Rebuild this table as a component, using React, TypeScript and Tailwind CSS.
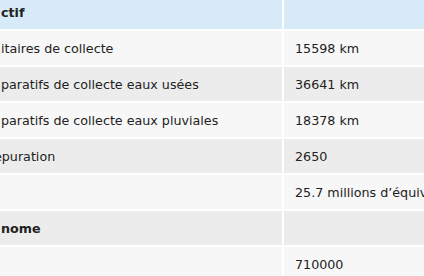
import React from "react";

type Row = { label: string; value: string; bg: string; bold?: boolean; pre?: string };

const rows: Row[] = [
  { label: "itaires de collecte", value: "15598 km", bg: "bg-[#f7f7f7]" },
  { label: "paratifs de collecte eaux usées", value: "36641 km", bg: "bg-[#ececec]" },
  { label: "paratifs de collecte eaux pluviales", value: "18378 km", bg: "bg-[#f7f7f7]" },
  { label: "puration", value: "2650", bg: "bg-[#ececec]", pre: "é" },
  { label: "", value: "25.7 millions d’équivalents habitants", bg: "bg-[#f7f7f7]" },
  { label: "nome", value: "", bg: "bg-[#ececec]", bold: true },
  { label: "", value: "710000", bg: "bg-[#f7f7f7]" },
];

export default function App() {
  return (
    <div
      className="w-[424px] h-[276px] overflow-hidden bg-white text-[12.7px] text-[#222222]"
      style={{ fontFamily: '"DejaVu Sans", Verdana, sans-serif' }}
    >
      <div className="-mt-[5px] flex flex-col gap-[2px]">
        <div className="grid grid-cols-[282px_1fr] gap-[2px] h-[34px]">
          <div className="bg-[#d6ebf7] flex items-center pl-[1px] pt-[2px] font-bold whitespace-nowrap overflow-hidden">
            ctif
          </div>
          <div className="bg-[#d6ebf7]" />
        </div>
        {rows.map((r, i) => (
          <div key={i} className="grid grid-cols-[282px_1fr] gap-[2px] h-[34px]">
            <div
              className={`${r.bg} flex items-center pl-[1px] pt-[2px] whitespace-nowrap overflow-hidden ${
                r.bold ? "font-bold" : ""
              }`}
            >
              {r.pre ? <span className="-ml-[7px]">{r.pre}</span> : null}
              {r.label}
            </div>
            <div className={`${r.bg} flex items-center pl-[11px] pt-[2px] whitespace-nowrap overflow-hidden`}>
              {r.value}
            </div>
          </div>
        ))}
      </div>
    </div>
  );
}
